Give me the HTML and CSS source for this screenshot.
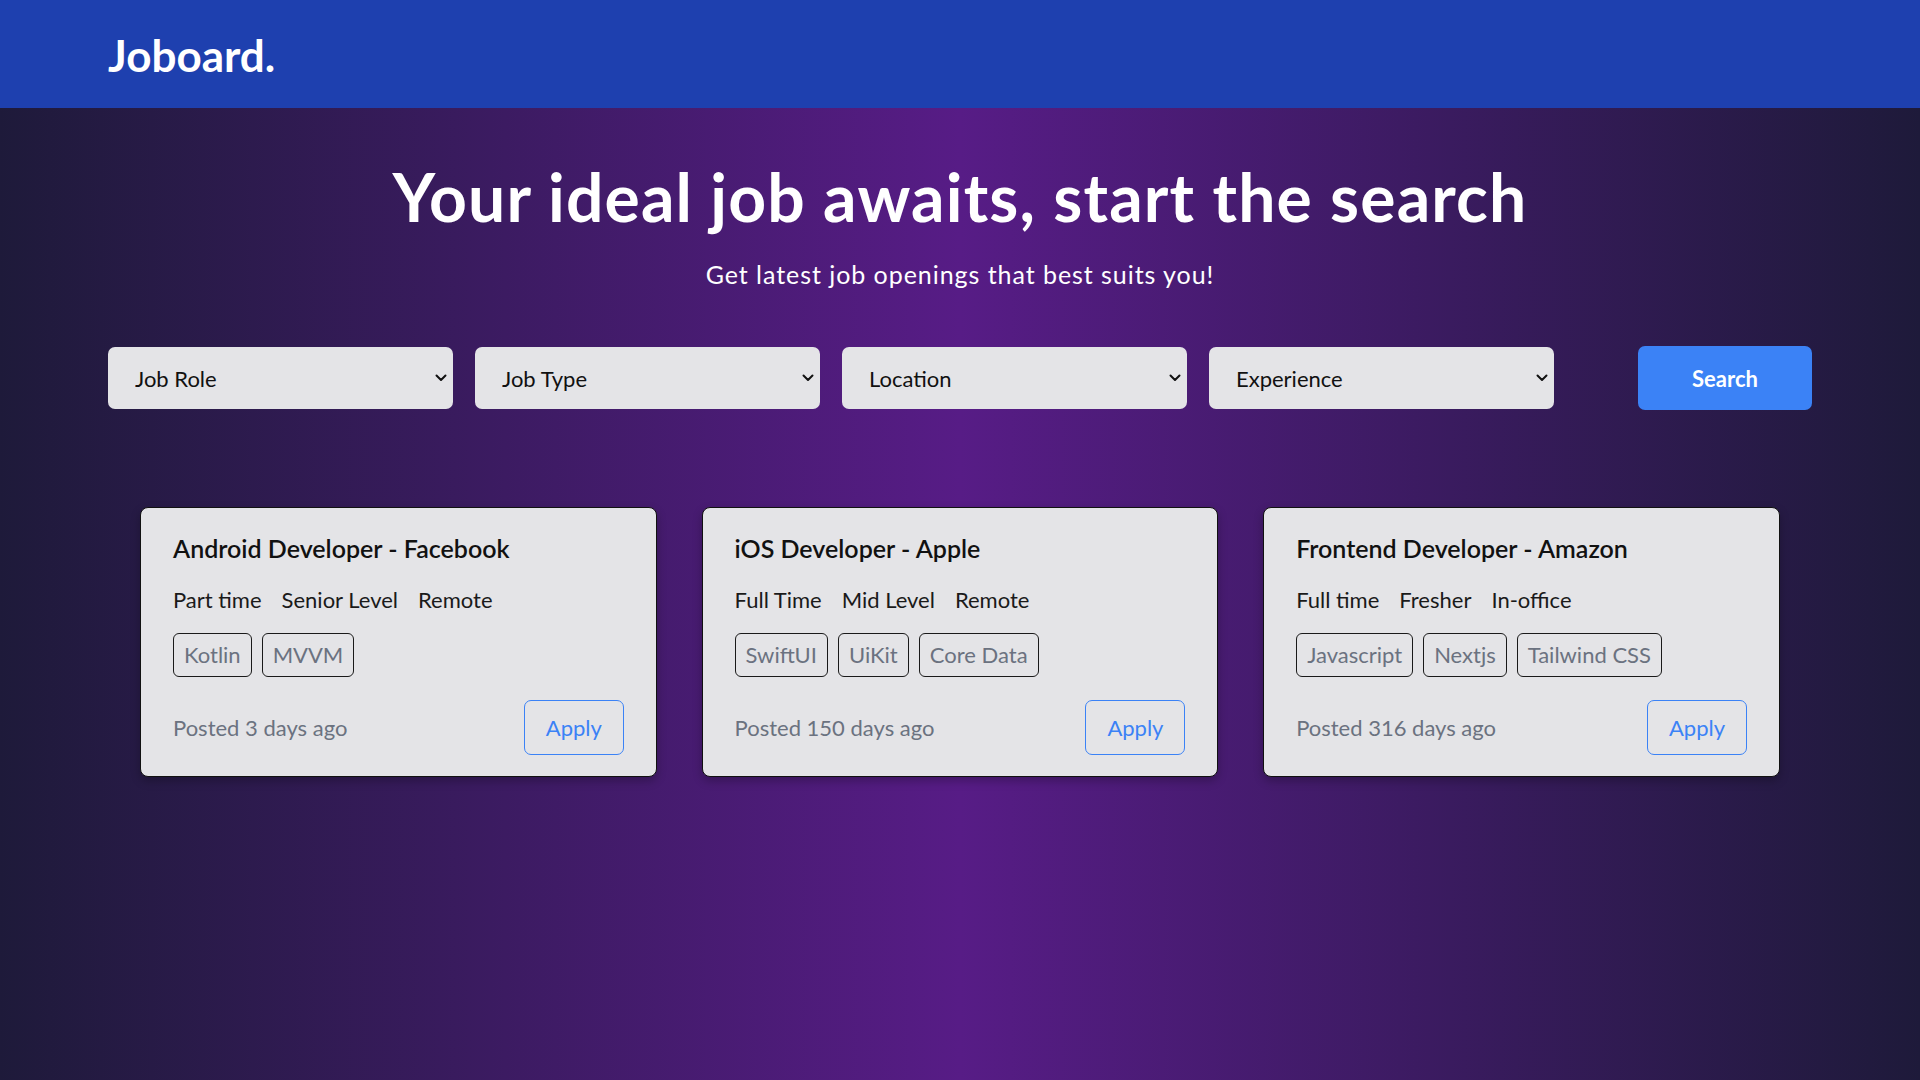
FILE: index.html
```html
<!DOCTYPE html>
<html lang="en">
<head>
<meta charset="utf-8">
<title>Joboard</title>
<link rel="stylesheet" href="styles.css">
</head>
<body>
<header class="topbar">
  <div class="logo">Joboard.</div>
</header>
<main class="hero">
  <h1 class="hero-title">Your ideal job awaits, start the search</h1>
  <p class="hero-sub">Get latest job openings that best suits you!</p>

  <form class="filters">
    <div class="filter-group">
      <div class="select-wrap">
        <select class="select"><option>Job Role</option></select>
        <svg class="chev" viewBox="0 0 12 8" width="12" height="8"><path d="M1.5 1.5l4.5 4.5 4.5-4.5" fill="none" stroke="#111" stroke-width="2" stroke-linecap="round" stroke-linejoin="round"/></svg>
      </div>
      <div class="select-wrap">
        <select class="select"><option>Job Type</option></select>
        <svg class="chev" viewBox="0 0 12 8" width="12" height="8"><path d="M1.5 1.5l4.5 4.5 4.5-4.5" fill="none" stroke="#111" stroke-width="2" stroke-linecap="round" stroke-linejoin="round"/></svg>
      </div>
      <div class="select-wrap">
        <select class="select"><option>Location</option></select>
        <svg class="chev" viewBox="0 0 12 8" width="12" height="8"><path d="M1.5 1.5l4.5 4.5 4.5-4.5" fill="none" stroke="#111" stroke-width="2" stroke-linecap="round" stroke-linejoin="round"/></svg>
      </div>
      <div class="select-wrap">
        <select class="select"><option>Experience</option></select>
        <svg class="chev" viewBox="0 0 12 8" width="12" height="8"><path d="M1.5 1.5l4.5 4.5 4.5-4.5" fill="none" stroke="#111" stroke-width="2" stroke-linecap="round" stroke-linejoin="round"/></svg>
      </div>
    </div>
    <button type="button" class="search-btn">Search</button>
  </form>

  <section class="jobs">
    <article class="card">
      <h2 class="card-title">Android Developer - Facebook</h2>
      <div class="meta"><span>Part time</span><span>Senior Level</span><span>Remote</span></div>
      <div class="tags"><span class="tag">Kotlin</span><span class="tag">MVVM</span></div>
      <div class="card-foot">
        <span class="posted">Posted 3 days ago</span>
        <button type="button" class="apply">Apply</button>
      </div>
    </article>
    <article class="card">
      <h2 class="card-title">iOS Developer - Apple</h2>
      <div class="meta"><span>Full Time</span><span>Mid Level</span><span>Remote</span></div>
      <div class="tags"><span class="tag">SwiftUI</span><span class="tag">UiKit</span><span class="tag">Core Data</span></div>
      <div class="card-foot">
        <span class="posted">Posted 150 days ago</span>
        <button type="button" class="apply">Apply</button>
      </div>
    </article>
    <article class="card">
      <h2 class="card-title">Frontend Developer - Amazon</h2>
      <div class="meta"><span>Full time</span><span>Fresher</span><span>In-office</span></div>
      <div class="tags"><span class="tag">Javascript</span><span class="tag">Nextjs</span><span class="tag">Tailwind CSS</span></div>
      <div class="card-foot">
        <span class="posted">Posted 316 days ago</span>
        <button type="button" class="apply">Apply</button>
      </div>
    </article>
  </section>
</main>
</body>
</html>
```

FILE: styles.css
```css
* { box-sizing: border-box; }

html, body {
  margin: 0;
  padding: 0;
}

body {
  font-family: "Lato", "Noto Sans", "Open Sans", sans-serif;
  min-height: 100vh;
  background: linear-gradient(to right, #1e1a3a 0%, #571c86 50%, #1e1a3a 100%);
  color: #111;
}

.topbar {
  height: 108px;
  background: #1e40af;
  display: flex;
  align-items: center;
  padding: 3px 108px 0;
}

.logo {
  color: #fff;
  font-weight: 700;
  font-size: 44px;
  line-height: 1.2;
}

.hero {
  padding: 49px 108px 0;
  display: flex;
  flex-direction: column;
  align-items: stretch;
}

.hero-title {
  margin: 0;
  text-align: center;
  color: #fff;
  font-weight: 700;
  font-size: 66px;
  line-height: 79px;
  letter-spacing: 1.15px;
}

.hero-sub {
  margin: 22px 0 0;
  text-align: center;
  color: #fff;
  font-size: 25px;
  line-height: 32px;
  letter-spacing: 0.95px;
}

.filters {
  margin-top: 56px;
  display: flex;
  align-items: center;
  justify-content: space-between;
}

.filter-group {
  display: flex;
  gap: 22px;
}

.select-wrap {
  position: relative;
  width: 345px;
  height: 62px;
}

.select {
  appearance: none;
  -webkit-appearance: none;
  width: 100%;
  height: 100%;
  border: none;
  border-radius: 7px;
  background: #e4e4e7;
  font-family: inherit;
  font-size: 22px;
  color: #111;
  padding: 0 30px 0 27px;
  outline: none;
}

.chev {
  position: absolute;
  right: 6px;
  top: 50%;
  transform: translateY(-50%);
  pointer-events: none;
}

.search-btn {
  width: 174px;
  height: 64px;
  border: none;
  border-radius: 7px;
  background: #3b82f6;
  color: #fff;
  font-family: inherit;
  font-weight: 700;
  font-size: 22px;
}

.jobs {
  margin: 97px 32px 0;
  display: grid;
  grid-template-columns: repeat(3, 1fr);
  gap: 44.7px;
}

.card {
  background: #e4e4e7;
  border: 1px solid #111;
  border-radius: 8px;
  padding: 24px 32px 21px;
  box-shadow: 0 4px 10px rgba(0, 0, 0, 0.25);
}

.card-title {
  margin: 0;
  font-size: 25px;
  font-weight: 600;
  line-height: 32px;
  color: #111;
}

.meta {
  margin-top: 21px;
  display: flex;
  gap: 20px;
  font-size: 22px;
  line-height: 30px;
  color: #1a1a1a;
}

.tags {
  margin-top: 18px;
  display: flex;
  gap: 10px;
}

.tag {
  border: 1px solid #1a1a1a;
  border-radius: 6px;
  padding: 6px 10px;
  font-size: 22px;
  line-height: 30px;
  color: #6b7280;
}

.card-foot {
  margin-top: 23px;
  display: flex;
  align-items: center;
  justify-content: space-between;
}

.posted {
  font-size: 22px;
  line-height: 30px;
  color: #6b7280;
}

.apply {
  background: transparent;
  border: 1px solid #3b82f6;
  border-radius: 7px;
  color: #3b82f6;
  font-family: inherit;
  font-size: 22px;
  line-height: 29px;
  padding: 12px 21px;
}
```
